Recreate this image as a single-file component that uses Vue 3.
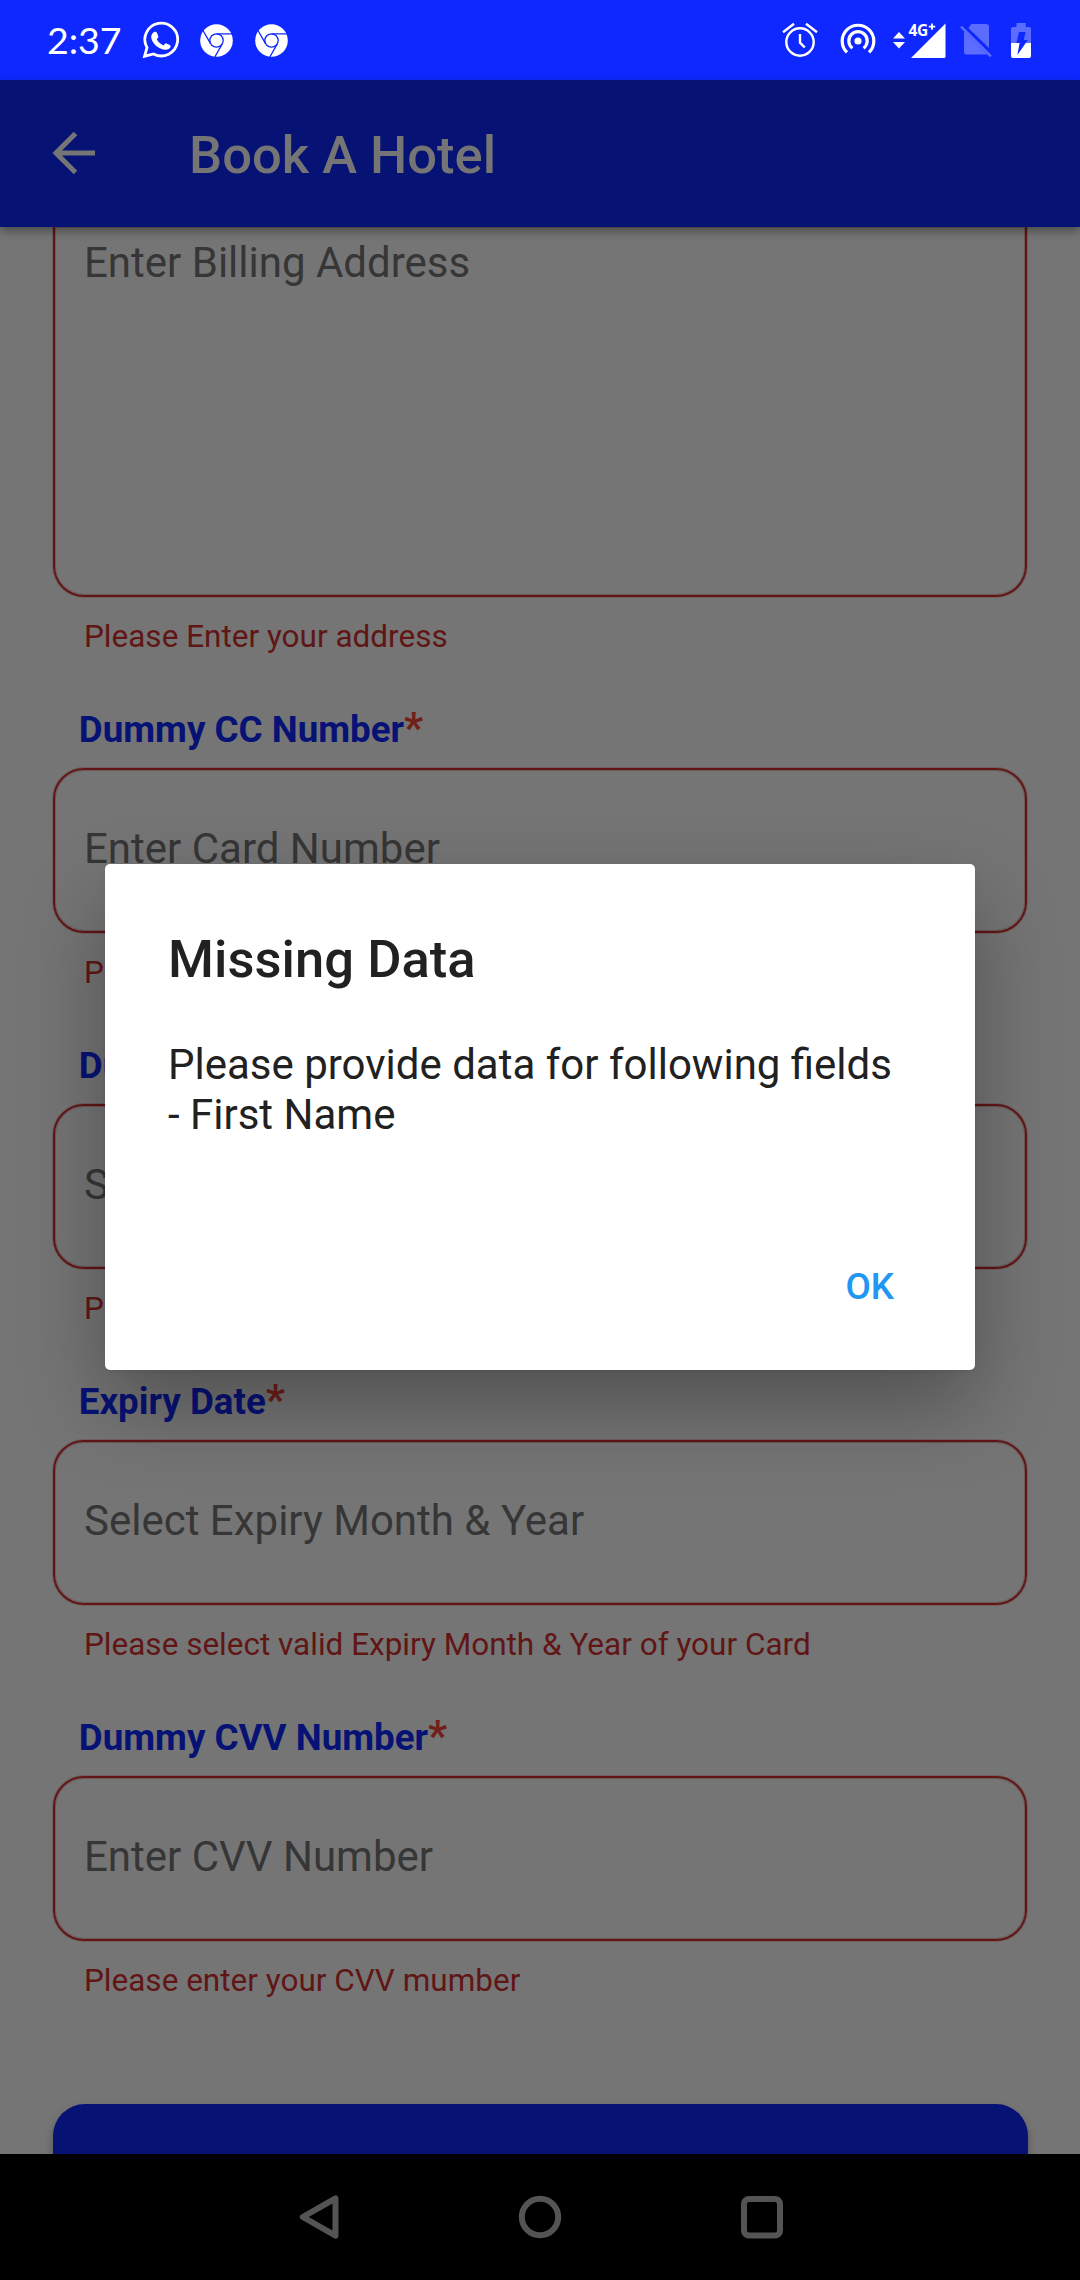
<script setup>
const fields = [
  { label: 'Dummy CC Number', placeholder: 'Enter Card Number', error: 'Ple' },
  { label: 'Du', placeholder: 'Se', error: 'Ple' },
  { label: 'Expiry Date', placeholder: 'Select Expiry Month & Year', error: 'Please select valid Expiry Month & Year of your Card' },
  { label: 'Dummy CVV Number', placeholder: 'Enter CVV Number', error: 'Please enter your CVV mumber' },
]
</script>

<template>
  <div class="phone">
    <header class="status">
      <span class="clock">2:37</span>
      <svg class="whatsapp" width="38" height="38" viewBox="0 0 38 38">
        <path d="M2.600 35.200 5 26.600A16.400 16.400 0 1 1 11.600 33Z" fill="none" stroke="#fff" stroke-width="2.800" />
        <path d="M12 11c1.300-.6 2.400-.4 2.900.7l1.300 3.200c.4 1-.1 1.700-1.500 3.300 1.600 2.900 3.900 4.900 6.900 6.200 1.400-1.800 2-2.400 2.900-2l3.200 1.500c1 .5 1.200 1 .8 2.200-.8 2.100-3.200 3-5.600 2.700-7.300-1.200-12.100-6-13.500-11.300-.6-2.600.4-5.300 2.600-6.500z" fill="#fff" />
      </svg>
      <svg v-for="n in 2" :key="n" class="chrome" width="33" height="33" viewBox="0 0 33 33">
        <circle cx="16.500" cy="16.500" r="16.300" fill="#fff" />
        <g fill="none" stroke="#0f28ff" stroke-width="1.300">
          <circle cx="16.500" cy="16.500" r="6.700" />
          <path d="M16.500 9.800H32M10.700 19.900 3 6.500M22.300 19.900 14.800 33" />
        </g>
      </svg>
      <div class="spacer"></div>
      <svg class="alarm" width="36" height="36" viewBox="0 0 36 36" fill="none" stroke="#fff" stroke-width="2.400">
        <circle cx="18" cy="20" r="13.700" />
        <path d="M18 12v8.700l4.800 4.800M1 10.300 12 1.700M24 1.700l11 8.600" />
      </svg>
      <svg class="hotspot" width="36" height="36" viewBox="0 0 36 36" fill="none" stroke="#fff" stroke-width="3.200">
        <circle cx="18" cy="19" r="3.600" fill="#fff" stroke="none" />
        <path d="M12.400 26.200a9.200 9.200 0 1 1 11.200 0M7 30.400a15.800 15.800 0 1 1 22 0" />
      </svg>
      <svg class="signal" width="54" height="45" viewBox="0 -4 54 45" fill="#fff">
        <path d="M0 16.400 6 10l6 6.400zM0 20h12l-6 6.400z" />
        <path d="M18 36h33a1.500 1.500 0 0 0 1.500-1.500V1.500z" />
        <text x="15.500" y="13.500" class="net">4G</text>
        <path d="M35.800 4.600h6.400M39 1.400v6.400" stroke="#fff" stroke-width="1.800" />
      </svg>
      <svg class="sim" width="32" height="35" viewBox="0 0 32 35">
        <path d="M11.500 1H26a3 3 0 0 1 3 3v21L8.300 5z" fill="#5b6cff" />
        <path d="M4 8 27 31.500H6.500A2.500 2.500 0 0 1 4 29z" fill="#5b6cff" />
        <path d="m1.800 4.300 28.400 28.400" stroke="#5b6cff" stroke-width="2.600" stroke-linecap="round" />
      </svg>
      <svg class="battery" width="20" height="35" viewBox="0 0 20 35">
        <path d="M5.500 0h9.200v4H18a2 2 0 0 1 2 2v14H0V6a2 2 0 0 1 2-2h3.500z" fill="#5b6cff" />
        <path d="M0 20h20v13a2 2 0 0 1-2 2H2a2 2 0 0 1-2-2z" fill="#fff" />
        <path d="M8 9h6.600l-1.800 8h4L6.400 32l2.200-12H5.400z" fill="#0f28ff" />
      </svg>
    </header>

    <div class="appbar">
      <svg class="back" width="44" height="44" viewBox="0 0 44 44" fill="none" stroke="#757575" stroke-width="5">
        <path d="M23.500 2.500 4 22 23.500 41.500M4.200 22H43" />
      </svg>
      <h1 class="title">Book A Hotel</h1>
    </div>

    <main class="form">
      <div class="box area"><span class="hint">Enter Billing Address</span></div>
      <p class="error">Please Enter your address</p>
      <section v-for="f in fields" :key="f.label" class="field">
        <div class="label">{{ f.label }}<span class="star" v-if="f.label.length > 2">*</span></div>
        <div class="box"><span class="hint">{{ f.placeholder }}</span></div>
        <p class="error">{{ f.error }}</p>
      </section>
      <div class="submit"></div>
    </main>

    <nav class="nav">
      <svg width="46" height="46" viewBox="0 0 46 46"><path d="M40.500 4.300v37.400L7.800 23z" /></svg>
      <svg width="46" height="46" viewBox="0 0 46 46"><circle cx="23" cy="23" r="18.200" /></svg>
      <svg width="46" height="46" viewBox="0 0 46 46"><rect x="5" y="5" width="36" height="36.500" rx="5" /></svg>
    </nav>

    <div class="dialog">
      <h2 class="dialog-title">Missing Data</h2>
      <p class="dialog-body">Please provide data for following fields<br>- First Name</p>
      <div class="actions"><span class="ok">OK</span></div>
    </div>
  </div>
</template>

<style>
body { margin: 0; background: #000; }
</style>

<style scoped>
.phone {
  position: relative;
  width: 1080px;
  height: 2280px;
  display: flex;
  flex-direction: column;
  overflow: hidden;
  background: #757575;
  font-family: Roboto, "Liberation Sans", sans-serif;
}
.status {
  flex: none;
  height: 80px;
  box-sizing: border-box;
  display: flex;
  align-items: center;
  padding: 0 49px 0 47px;
  background: #0f28ff;
  color: #fff;
}
.clock { font: 400 37.500px/82px Lato, "Noto Sans", sans-serif; width: 95px; white-space: nowrap; }
.spacer { flex: 1; }
.whatsapp { margin-right: -2px; }
.chrome { margin-left: 22px; }
.chrome + .spacer { margin-right: -2px; }
.hotspot { margin-left: 22px; }
.signal { margin-left: 17px; }
.sim { margin-left: 13px; }
.battery { margin-left: 19px; }
.net { font: 700 15.500px "Noto Sans", sans-serif; letter-spacing: -.4px; }
.appbar {
  flex: none;
  height: 147px;
  display: flex;
  align-items: center;
  background: #071275;
  box-shadow: 0 4px 9px rgba(0, 0, 0, .36);
  z-index: 1;
}
.back { margin: 0 0 1px 52px; }
.title { margin: 2px 0 0 93px; font-size: 52.500px; font-weight: 500; line-height: 62px; color: #757575; }
.form { flex: 1; min-height: 0; overflow: hidden; padding: 0 52px; display: flex; flex-direction: column; }
.box {
  flex: none;
  box-sizing: border-box;
  height: 165px;
  margin: 0 1px;
  border: 2px solid #611616;
  border-radius: 31px;
  box-shadow: 0 0 0 1px rgba(97, 22, 22, .2), inset 0 0 0 1px rgba(97, 22, 22, .3);
  padding: 0 29px 4px;
  display: flex;
  align-items: center;
}
.area { height: 370px; border-top: 0; border-radius: 0 0 31px 31px; align-items: flex-start; padding-top: 11px; }
.hint { font-size: 42px; line-height: 50px; color: #363636; white-space: nowrap; }
.error { flex: none; margin: 21px 0 0 32px; font-size: 31.500px; line-height: 38px; color: #611616; white-space: nowrap; }
.field { flex: none; height: 336px; display: flex; flex-direction: column; }
.label { flex: none; height: 112px; padding: 52px 0 0 26.750px; box-sizing: border-box; font-size: 36.750px; font-weight: 700; line-height: 44px; color: #071275; white-space: nowrap; }
.star { font-size: 42px; font-weight: 700; color: #701f19; line-height: 0; }
.submit { flex: none; height: 120px; margin: 104px .5px 0; background: #071275; border-radius: 32px; box-shadow: 0 5px 8px rgba(0, 0, 0, .3); }
.nav {
  flex: none;
  height: 126px;
  display: flex;
  align-items: center;
  justify-content: center;
  gap: 176px;
  background: #000;
  z-index: 1;
}
.nav svg { fill: none; stroke: #545454; stroke-width: 6; stroke-linejoin: round; }
.dialog {
  position: absolute;
  z-index: 2;
  left: 105px;
  top: 864px;
  width: 870px;
  height: 506px;
  box-sizing: border-box;
  padding: 64px 63px 0;
  background: #fff;
  border-radius: 5px;
  box-shadow: 0 36px 84px rgba(0, 0, 0, .31), 0 2px 4px rgba(0, 0, 0, .06);
  color: #212121;
}
.dialog-title { margin: 0; font-size: 52.500px; font-weight: 500; line-height: 62px; letter-spacing: .05px; }
.dialog-body { margin: 50px 0 0; font-size: 42px; line-height: 50px; white-space: nowrap; }
.actions { display: flex; justify-content: flex-end; padding-right: 18px; margin-top: 125px; }
.ok { font-size: 36.750px; line-height: 44px; font-weight: 500; color: #2196f3; }
</style>
